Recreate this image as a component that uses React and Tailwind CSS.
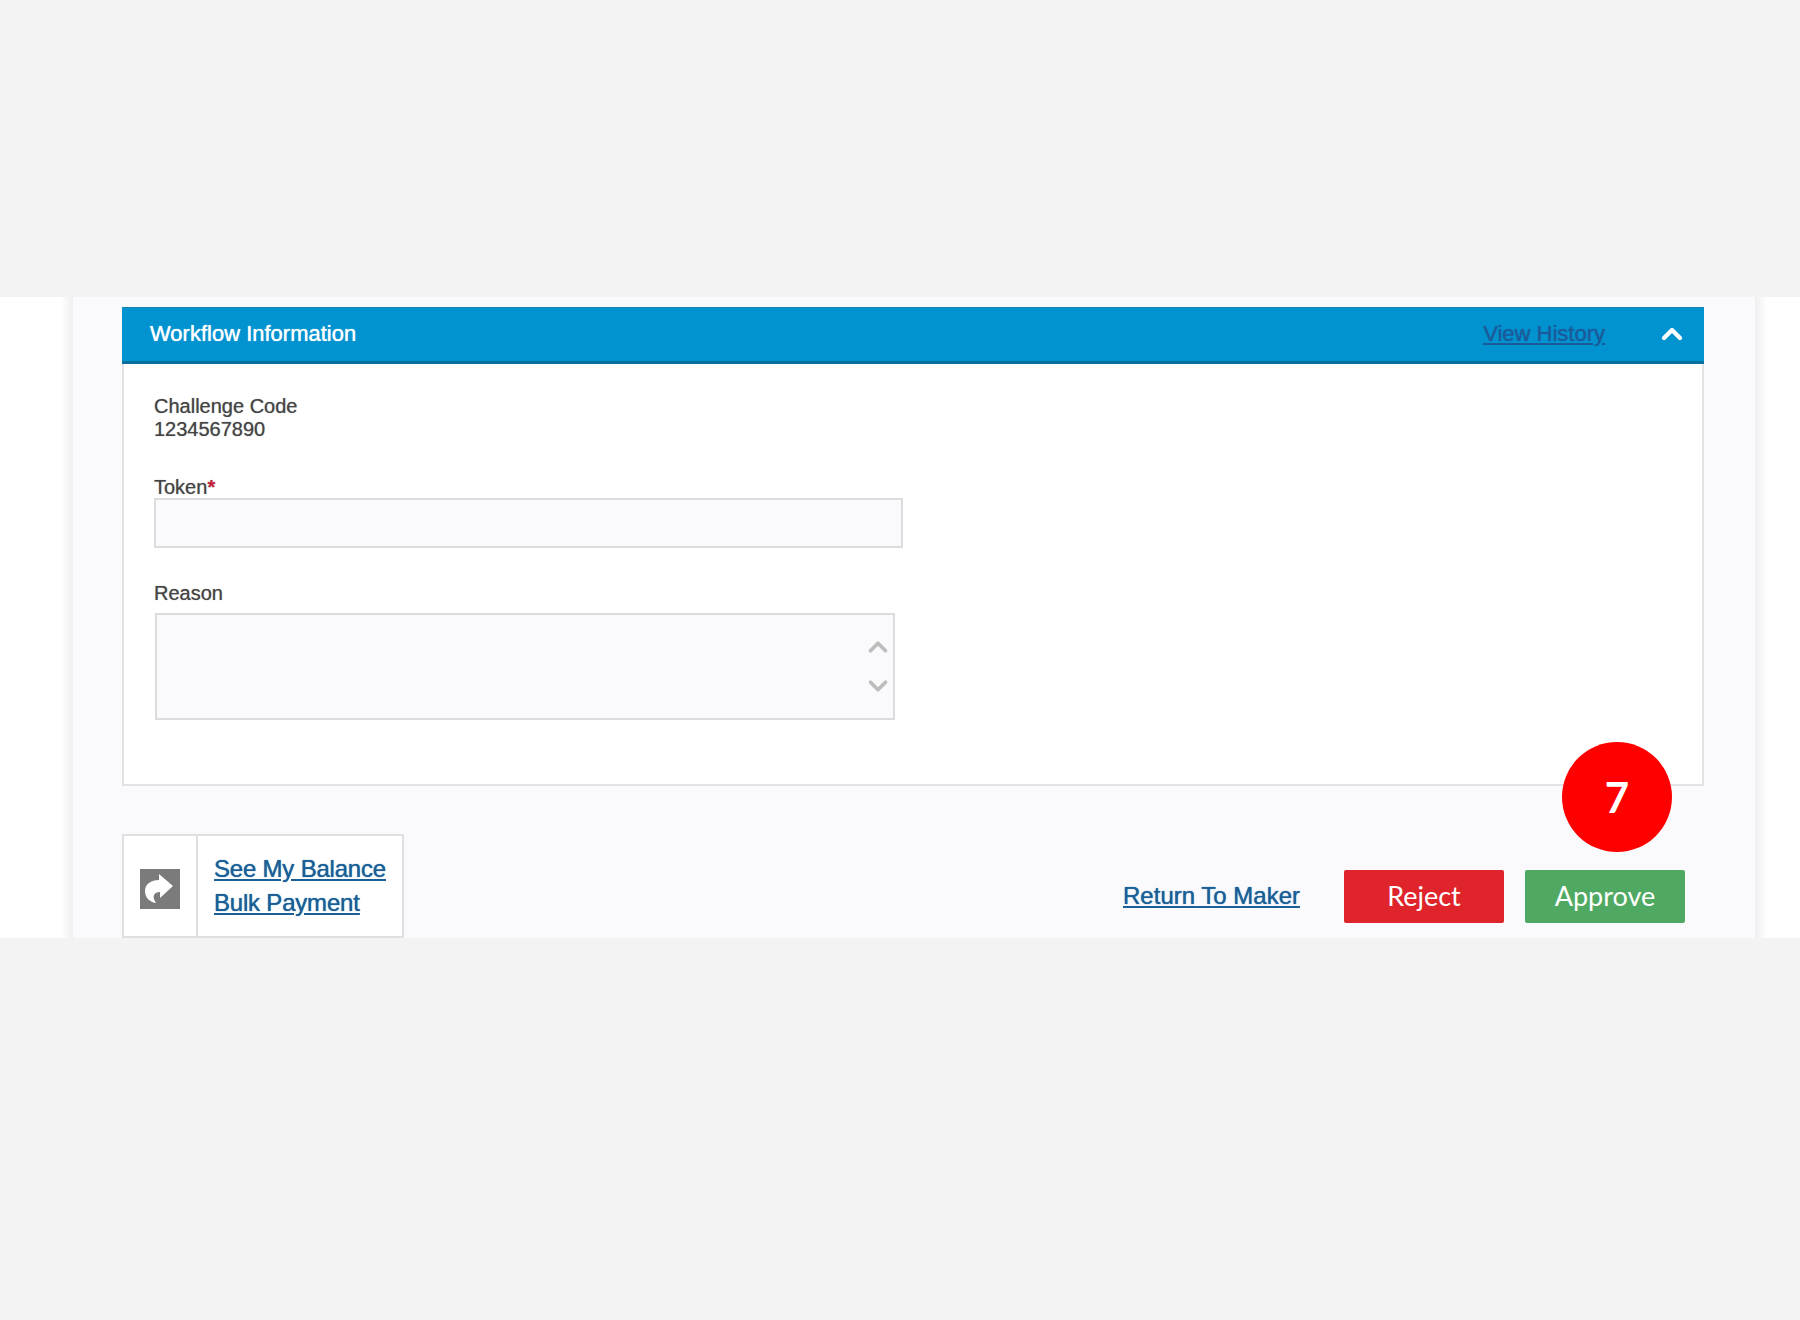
import { ChevronUp, ChevronDown } from "lucide-react";

const arial = "font-['Liberation_Sans',Arial,sans-serif]";

function ShareIcon() {
  return (
    <div className="grid h-10 w-10 place-items-center bg-[#7b7b7b]">
      <svg viewBox="0 0 40 40" className="h-10 w-10" fill="#fff">
        <path d="M19 5 L33 17 L20 29 L20 23 C17 23 15 24 14 26 C13 28 14 31 16 34 C9 33 5 28 5 22 C5 15 11 11 19 11 Z" />
      </svg>
    </div>
  );
}

export default function App() {
  return (
    <main className={`relative flex min-h-[1320px] flex-col bg-[#f4f3f4] ${arial}`}>
      <div className="h-[297px]" />

      <div className="flex h-[641px] bg-white pl-[61px] pr-[33px]">
        <div className="w-3 bg-gradient-to-r from-white to-[#efeff1]" />

        <section className="relative flex flex-1 flex-col bg-[#fafafd] pl-[49px] pr-[51px] pt-[10px]">
          <div className="flex h-[57px] items-center border-b-[3px] border-t border-b-[#0b6f9e] border-t-[#1b7fae] bg-[#0093d0] pb-0.5 pl-7 pr-4">
            <h2 className="text-[22px] text-white [text-shadow:0_0_1px_#fff]">Workflow Information</h2>
            <a className="ml-auto mr-px text-[22px] text-[#1b5b9b] underline [text-shadow:0_0_1px_#1b5b9b]">
              View History
            </a>
            <ChevronUp className="ml-[50px] h-8 w-8 text-white" strokeWidth={3.2} />
          </div>

          <div className="h-[422px] border-x-2 border-b-2 border-[#e3e3e6] bg-white pl-[30px] pt-[31px] text-[#444]">
            <div className="text-[20px] leading-[23px] [text-shadow:0_0_1px_#888]">
              <p>Challenge Code</p>
              <p>1234567890</p>
            </div>

            <label className="mt-[35px] block text-[20px] leading-[22px] [text-shadow:0_0_1px_#888]">
              Token<span className="font-bold text-[#c8203c]">*</span>
            </label>
            <div className="h-[50px] w-[749px] border-2 border-[#dcdcdf] bg-[#fafafd]" />

            <label className="mt-[34px] block text-[20px] leading-[23px] [text-shadow:0_0_1px_#888]">Reason</label>
            <div className="ml-px mt-[8px] flex h-[107px] w-[740px] flex-col items-end justify-center gap-[9px] border-2 border-[#dcdcdf] bg-[#fafafd]">
              <ChevronUp className="h-[30px] w-[30px] text-[#bdbdbd]" strokeWidth={3} />
              <ChevronDown className="h-[30px] w-[30px] text-[#bdbdbd]" strokeWidth={3} />
            </div>
          </div>

          <div className="mt-[47px] flex flex-1 items-end justify-between">
            <div className="flex h-[104px] w-[282px] border-2 border-[#e0e0e3] bg-white">
              <div className="grid w-[74px] place-items-center border-r-2 border-[#e0e0e3] pt-[6px]">
                <ShareIcon />
              </div>
              <div className="flex flex-col justify-center pl-4 text-[24px] leading-[34px] tracking-[-0.2px] text-[#1a5f96] [text-shadow:0_0_1px_#1a5f96]">
                <a className="underline">See My Balance</a>
                <a className="underline">Bulk Payment</a>
              </div>
            </div>

            <div className="flex h-[84px] items-center">
              <a className="mr-[44px] text-[24px] text-[#1a5f96] underline [text-shadow:0_0_1px_#1a5f96]">Return To Maker</a>
              <button className="mr-[21px] h-[53px] w-[160px] rounded-[2px] bg-[#e0242c] font-['Lato',sans-serif] text-[27px] text-white">
                Reject
              </button>
              <button className="mr-[19px] h-[53px] w-[160px] rounded-[2px] bg-[#4fa963] font-['Lato',sans-serif] text-[27px] text-white">
                Approve
              </button>
            </div>
          </div>

          {/* step marker over the buttons */}
          <div className="absolute left-[1489px] top-[445px] grid h-[110px] w-[110px] place-items-center rounded-full bg-[#ff0000] font-['Lato',sans-serif] text-[42px] font-bold text-white">
            7
          </div>
        </section>

        <div className="w-3 bg-gradient-to-l from-white to-[#efeff1]" />
      </div>
    </main>
  );
}
